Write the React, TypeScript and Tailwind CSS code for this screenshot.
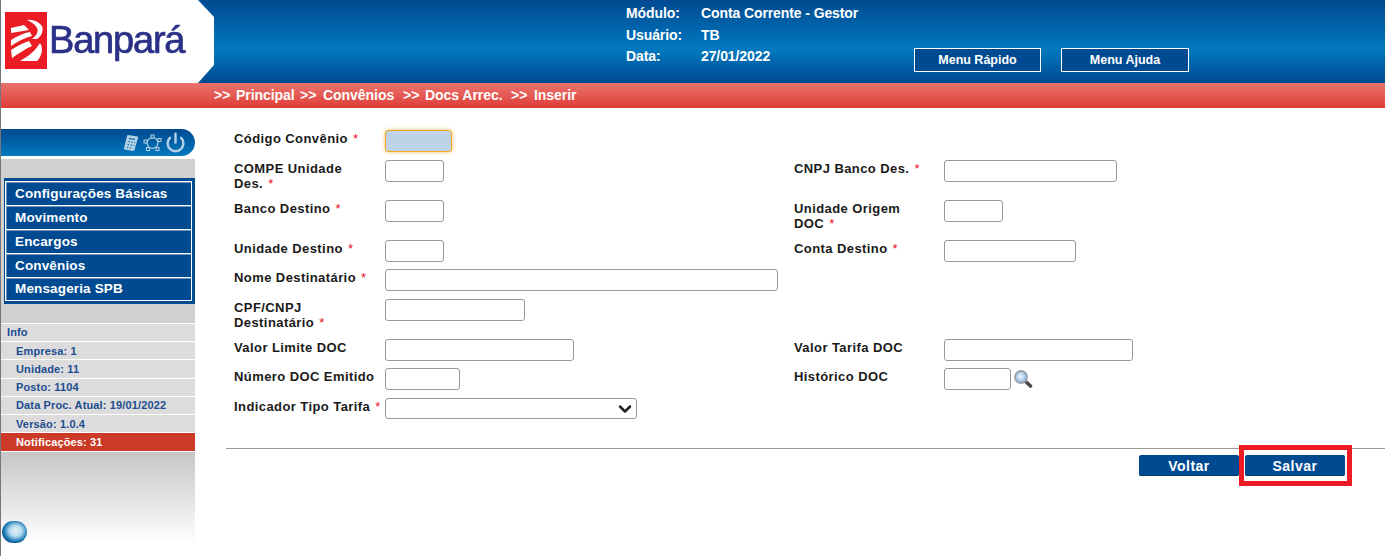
import { ReactNode } from "react";
import { ChevronDown, Power } from "lucide-react";

const font = "font-['Liberation_Sans',Arial,sans-serif]";

interface Field {
  label: ReactNode;
  required?: boolean;
  input: string;
}

interface Row {
  height: string;
  left: Field;
  right?: Field;
}

const rows: Row[] = [
  {
    height: "h-[30px]",
    left: {
      label: "Código Convênio",
      required: true,
      input: "w-[67px] border-[#f5a623] bg-[#bfd3e8] shadow-[0_0_4px_#f5c36a]",
    },
  },
  {
    height: "h-[40px]",
    left: {
      label: (
        <>
          COMPE Unidade
          <br />
          Des.
        </>
      ),
      required: true,
      input: "w-[59px]",
    },
    right: { label: "CNPJ Banco Des.", required: true, input: "w-[173px]" },
  },
  {
    height: "h-[40px]",
    left: { label: "Banco Destino", required: true, input: "w-[59px]" },
    right: {
      label: (
        <>
          Unidade Origem
          <br />
          DOC
        </>
      ),
      required: true,
      input: "w-[59px]",
    },
  },
  {
    height: "h-[29px]",
    left: { label: "Unidade Destino", required: true, input: "w-[59px]" },
    right: { label: "Conta Destino", required: true, input: "w-[132px]" },
  },
  {
    height: "h-[30px]",
    left: { label: "Nome Destinatário", required: true, input: "w-[393px]" },
  },
  {
    height: "h-[40px]",
    left: {
      label: (
        <>
          CPF/CNPJ
          <br />
          Destinatário
        </>
      ),
      required: true,
      input: "w-[140px]",
    },
  },
  {
    height: "h-[29px]",
    left: { label: "Valor Limite DOC", input: "w-[189px]" },
    right: { label: "Valor Tarifa DOC", input: "w-[189px]" },
  },
  {
    height: "h-[30px]",
    left: { label: "Número DOC Emitido", input: "w-[75px]" },
    right: { label: "Histórico DOC", input: "w-[67px]" },
  },
];

const menu = ["Configurações Básicas", "Movimento", "Encargos", "Convênios"];

function FieldLabel({ label, required }: { label: ReactNode; required?: boolean }) {
  return (
    <label className="block pt-px text-[13px] leading-[15px] font-bold tracking-[0.42px] text-[#1a1a1a]">
      {label}
      {required && <span className="ml-[5px] text-[13px] font-normal text-[#e8101f]">*</span>}
    </label>
  );
}

function SearchIcon() {
  return (
    <svg width="20" height="20" viewBox="0 0 20 20" className="ml-[2px] blur-[0.3px]">
      <defs>
        <radialGradient id="lens" cx="0.45" cy="0.45" r="0.6">
          <stop offset="0" stopColor="#eef6fd" />
          <stop offset="1" stopColor="#7fb0e2" />
        </radialGradient>
      </defs>
      <path d="M12 12 L17.5 17" stroke="#4a4a4a" strokeWidth="3.6" strokeLinecap="round" />
      <circle cx="8" cy="8" r="6" fill="url(#lens)" stroke="#9aa3ab" strokeWidth="1.8" />
    </svg>
  );
}

function LogoMark() {
  return (
    <svg width="42" height="57" viewBox="0 0 42 57" className="shrink-0 blur-[0.4px]">
      <rect width="42" height="57" fill="#ec1c24" />
      <path
        d="M22 8 C27 7 33 9 37 14 C39 19 36 25 32 27 L27 27 C31 24 34 20 32 16 C30 12 26 10 22 8 Z"
        fill="#fff"
      />
      <path d="M6 16 L19 13 L24 18 L6 21 Z" fill="#fff" />
      <path d="M6 28 C12 24 19 21 25 20 L27 24 C19 26 12 30 6 34 Z" fill="#fff" />
      <path d="M6 38 C12 34 18 31 24 29 L27 34 C20 37 13 42 7 46 Z" fill="#fff" />
      <path d="M15 49 C24 44 31 38 35 31 C38 35 38 43 32 49 Z" fill="#fff" />
    </svg>
  );
}

function Logo() {
  return (
    <div className="flex h-[83px] w-[213px] shrink-0 items-start bg-white pt-[12px] pl-[4px] [clip-path:polygon(0_0,197px_0,213px_17px,213px_65px,197px_83px,0_83px)]">
      <LogoMark />
      <span className="ml-[2px] mt-[5px] text-[38px] leading-[46px] tracking-[-1.2px] text-[#2b3087] blur-[0.3px] [-webkit-text-stroke:0.7px_#2b3087]">
        Banpará
      </span>
    </div>
  );
}

function SidebarIcons() {
  return (
    <div className="flex h-[27px] items-center justify-end rounded-r-[14px] bg-gradient-to-b from-[#004a91] to-[#0279bf] pr-[9px] text-[#b3d0e5]">
      <svg width="16" height="18" viewBox="0 0 16 18" className="blur-[0.3px]">
        <path d="M5 1 L14.5 2.5 Q15.5 3 15 4 L11.5 16 Q11 17 10 17 L1.5 15.5 Q0.5 15 1 14 L4 2 Q4.2 1 5 1 Z" fill="currentColor" />
        <path
          d="M6 4.5l6 1M5.4 7.5l1.5.3M8.4 8l1.5.3M11.2 8.5l1 .2M4.6 10.5l1.5.3M7.6 11l1.5.3M10.4 11.5l1 .2M3.8 13.3l1.5.3M6.8 13.8l1.5.3"
          stroke="#2f7db5"
          strokeWidth="1.3"
        />
      </svg>
      <svg width="19" height="18" viewBox="0 0 19 18" fill="none" stroke="currentColor" className="ml-[4px]">
        <circle cx="9.5" cy="9" r="5.4" strokeWidth="1.2" />
        <g fill="#0b66a8" strokeWidth="1">
          <rect x="8" y="1" width="3" height="3" />
          <rect x="15" y="4.5" width="3" height="3" />
          <rect x="13" y="13.5" width="3" height="3" />
          <rect x="3.5" y="13.5" width="3" height="3" />
          <rect x="1" y="6" width="3" height="3" />
        </g>
      </svg>
      <Power size={21} strokeWidth={2.8} className="ml-[3px] blur-[0.3px]" />
    </div>
  );
}

function Sidebar() {
  return (
    <aside className="w-[194px] shrink-0 pt-[21px]">
      <SidebarIcons />
      <div className="mt-[3px] bg-[#d0d0d0] pt-[19px] pb-[19px]">
        <nav className="ml-[3px] bg-[#004a91] py-[3px] pr-[3px] pl-px">
          <ul className="border border-white text-[13.5px] font-bold tracking-[0.15px] text-white shadow-[inset_1px_1px_0_#6d93bf]">
            {menu.map((item) => (
              <li key={item} className="h-[24px] border-b border-white pl-[9px] leading-[23px] shadow-[0_1px_0_#6d93bf]">
                {item}
              </li>
            ))}
            <li className="h-[22px] pl-[9px] leading-[21px]">Mensageria SPB</li>
          </ul>
        </nav>
      </div>
      <ul className="border-t border-white text-[11px] leading-[18px] font-bold tracking-[0.14px] text-[#1d4c90]">
        <li className="h-[18px] border-b border-white bg-[#dcdcdc] pl-[6px] leading-[16px]">Info</li>
        <li className="h-[18px] border-b border-white bg-[#dcdcdc] pl-[15px]">Empresa: 1</li>
        <li className="h-[19px] border-b border-white bg-[#dcdcdc] pl-[15px]">Unidade: 11</li>
        <li className="h-[18px] border-b border-white bg-[#dcdcdc] pl-[15px] leading-[16px]">Posto: 1104</li>
        <li className="h-[18px] border-b border-white bg-[#dcdcdc] pl-[15px] leading-[16px]">Data Proc. Atual: 19/01/2022</li>
        <li className="h-[18px] border-b border-white bg-[#dcdcdc] pl-[15px]">Versão: 1.0.4</li>
        <li className="h-[19px] border-b border-white bg-[#cb3a26] pl-[15px] text-white">Notificações: 31</li>
      </ul>
      <div className="flex h-[91px] items-end bg-gradient-to-b from-[#c6c6c6] to-white pl-px">
        <div className="h-[22px] w-[25px] rounded-full bg-[radial-gradient(ellipse_at_55%_45%,#e6f3fa_0%,#b4daee_32%,#1a7ab5_60%,#082f5c_88%)] blur-[0.4px]" />
      </div>
    </aside>
  );
}

function Form() {
  return (
    <main className="flex-1 pt-[22px] pl-[31px]">
      <div className="pl-[8px]">
        {rows.map((row, i) => (
          <div key={i} className={`flex items-start ${row.height}`}>
            <div className="w-[151px] shrink-0">
              <FieldLabel label={row.left.label} required={row.left.required} />
            </div>
            <div className="w-[409px] shrink-0">
              <input className={`block h-[22px] rounded-[3px] border border-[#999] ${row.left.input}`} />
            </div>
            {row.right && (
              <>
                <div className="w-[150px] shrink-0">
                  <FieldLabel label={row.right.label} required={row.right.required} />
                </div>
                <div className="flex items-center">
                  <input className={`block h-[22px] rounded-[3px] border border-[#999] ${row.right.input}`} />
                  {i === 7 && <SearchIcon />}
                </div>
              </>
            )}
          </div>
        ))}
        <div className="flex items-start">
          <div className="w-[151px] shrink-0">
            <FieldLabel label="Indicador Tipo Tarifa" required />
          </div>
          <div className="relative h-[21px] w-[252px]">
            <select className="block h-[21px] w-full appearance-none rounded-[3px] border border-[#999] bg-white text-[13px]" />
            <ChevronDown size={20} strokeWidth={3} className="pointer-events-none absolute top-1/2 right-[2px] -translate-y-1/2 text-[#222]" />
          </div>
        </div>
      </div>
      <hr className="mt-[29px] border-t border-[#999]" />
      <div className="mt-[6px] flex items-start justify-end gap-[6px] pr-[40px]">
        <button className="block h-[21px] w-[100px] rounded-[2px] border-b border-[#003566] bg-[#004a91] pt-px text-[14px] font-bold tracking-[0.5px] text-white">
          Voltar
        </button>
        <div className="relative">
          <button className="block h-[21px] w-[100px] rounded-[2px] border-b border-[#003566] bg-[#004a91] pt-px text-[14px] font-bold tracking-[0.5px] text-white">
            Salvar
          </button>
          {/* marcação vermelha por cima do botão */}
          <div className="absolute -top-[10px] -right-[7px] -bottom-[10px] -left-[6px] border-[5px] border-[#ed1c24]" />
        </div>
      </div>
    </main>
  );
}

export default function App() {
  return (
    <div className={`h-[556px] overflow-hidden border-l border-[#777] bg-white ${font}`}>
      <header className="flex h-[83px] bg-gradient-to-b from-[#004a91] via-[#0279bf] via-60% to-[#004a91]">
        <Logo />
        <div className="ml-[412px] w-[288px] pt-[3px] text-[14px] leading-[21.5px] font-bold tracking-[-0.1px] text-white">
          <div className="flex">
            <span className="w-[75px]">Módulo:</span>
            <span>Conta Corrente - Gestor</span>
          </div>
          <div className="flex">
            <span className="w-[75px]">Usuário:</span>
            <span>TB</span>
          </div>
          <div className="flex">
            <span className="w-[75px]">Data:</span>
            <span>27/01/2022</span>
          </div>
        </div>
        <div className="mt-[48px] flex h-[24px] gap-[20px]">
          <button className="w-[127px] border border-white bg-[#004a91] text-[12.5px] font-bold text-white">
            Menu Rápido
          </button>
          <button className="w-[128px] border border-white bg-[#004a91] text-[12.5px] font-bold text-white">
            Menu Ajuda
          </button>
        </div>
      </header>
      <div className="flex h-[25px] items-center bg-gradient-to-b from-[#e9726e] to-[#df3a35] pb-[1px] pl-[213px] text-[14px] font-bold tracking-[-0.05px] text-white">
        <span className="w-[22px]">&gt;&gt;</span>
        <span className="w-[64px]">Principal</span>
        <span className="w-[23px]">&gt;&gt;</span>
        <span className="w-[80px]">Convênios</span>
        <span className="w-[22px]">&gt;&gt;</span>
        <span className="w-[86px]">Docs Arrec.</span>
        <span className="w-[23px]">&gt;&gt;</span>
        <span>Inserir</span>
      </div>
      <div className="flex">
        <Sidebar />
        <Form />
      </div>
    </div>
  );
}
